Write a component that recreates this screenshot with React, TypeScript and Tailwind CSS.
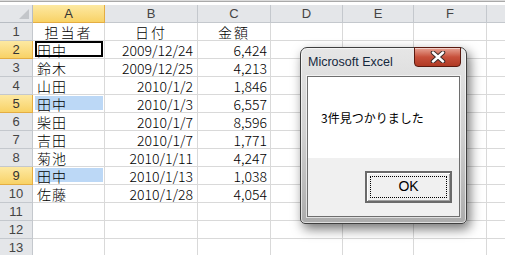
const jp = { fontFamily: '"Noto Sans CJK JP", "Noto Sans", sans-serif' };
const ui = { fontFamily: '"Liberation Sans", Arial, sans-serif' };

const cols = [
  { key: "A", w: "w-[72px]" },
  { key: "B", w: "w-[93px]" },
  { key: "C", w: "w-[73px]" },
  { key: "D", w: "w-[72px]" },
  { key: "E", w: "w-[71px]" },
  { key: "F", w: "w-[73px]" },
];

const data: [string, string, string][] = [
  ["田中", "2009/12/24", "6,424"],
  ["鈴木", "2009/12/25", "4,213"],
  ["山田", "2010/1/2", "1,846"],
  ["田中", "2010/1/3", "6,557"],
  ["柴田", "2010/1/7", "8,596"],
  ["吉田", "2010/1/7", "1,771"],
  ["菊池", "2010/1/11", "4,247"],
  ["田中", "2010/1/13", "1,038"],
  ["佐藤", "2010/1/28", "4,054"],
];

const found = new Set([2, 5, 9]);

function RowHead({ n }: { n: number }) {
  const on = found.has(n);
  return (
    <div
      className={
        on
          ? "w-[33px] h-[18px] shrink-0 flex items-center justify-center text-[13px] text-[#333] border-r border-b border-[#e4ad42] bg-gradient-to-b from-[#fde9a2] to-[#f8d265]"
          : "w-[33px] h-[18px] shrink-0 flex items-center justify-center text-[13px] text-[#444] border-r border-b border-[#c4c8cd] bg-[#e4e6e9]"
      }
      style={ui}
    >
      {n}
    </div>
  );
}

function Row({ n, cells }: { n: number; cells: [string, string, string] | null }) {
  const hl = n === 5 || n === 9;
  return (
    <div className="flex h-[18px]">
      <RowHead n={n} />
      <div className="w-[72px] shrink-0 border-r border-b border-[#d9d9d9] relative overflow-hidden flex items-center text-[14px] font-light text-black" style={jp}>
        {hl && <div className="absolute left-[2px] right-[1px] top-[1px] bottom-[2px] bg-[#bcd8f6]" />}
        {n === 2 && <div className="absolute left-[2px] right-[1px] top-0 bottom-[1px] border-2 border-black z-10" />}
        <span className="relative pl-[4px] leading-[14px] tracking-[1px]">{cells?.[0]}</span>
      </div>
      <div className="w-[93px] shrink-0 border-r border-b border-[#d9d9d9] overflow-hidden flex items-center justify-end pr-[4px] text-[14px] font-light text-black leading-[14px]" style={jp}>
        {cells?.[1]}
      </div>
      <div className="w-[73px] shrink-0 border-r border-b border-[#d9d9d9] overflow-hidden flex items-center justify-end pr-[3px] text-[14px] font-light text-black leading-[14px]" style={jp}>
        {cells?.[2]}
      </div>
      <div className="w-[72px] shrink-0 border-r border-b border-[#d9d9d9]" />
      <div className="w-[71px] shrink-0 border-r border-b border-[#d9d9d9]" />
      <div className="w-[73px] shrink-0 border-r border-b border-[#d9d9d9]" />
      <div className="flex-1 border-b border-[#d9d9d9]" />
    </div>
  );
}

function TitleRow() {
  return (
    <div className="flex h-[18px]">
      <RowHead n={1} />
      <div className="w-[72px] shrink-0 border-r border-b border-[#d9d9d9] overflow-hidden flex items-center justify-center text-[14px] font-light leading-[14px] tracking-[2px]" style={jp}>担当者</div>
      <div className="w-[93px] shrink-0 border-r border-b border-[#d9d9d9] overflow-hidden flex items-center justify-center text-[14px] font-light leading-[14px] tracking-[2px]" style={jp}>日付</div>
      <div className="w-[73px] shrink-0 border-r border-b border-[#d9d9d9] overflow-hidden flex items-center justify-center text-[14px] font-light leading-[14px] tracking-[2px]" style={jp}>金額</div>
      <div className="w-[72px] shrink-0 border-r border-b border-[#d9d9d9]" />
      <div className="w-[71px] shrink-0 border-r border-b border-[#d9d9d9]" />
      <div className="w-[73px] shrink-0 border-r border-b border-[#d9d9d9]" />
      <div className="flex-1 border-b border-[#d9d9d9]" />
    </div>
  );
}

function Dialog() {
  return (
    <div className="absolute left-[300px] top-[47px] w-[167px] h-[177px] rounded-t-[7px] rounded-b-[5px] border border-[#3f3f3f] bg-gradient-to-b from-[#e6e6e6] via-[#d0d0d0] to-[#acacac] shadow-[3px_5px_12px_rgba(0,0,0,0.55),inset_0_0_0_1px_rgba(255,255,255,0.6)] flex flex-col">
      <div className="h-[28px] shrink-0 flex items-center pl-[7px] text-[12.5px] text-[#15283d]" style={ui}>
        Microsoft Excel
      </div>
      <div className="absolute right-[5px] top-[-1px] w-[47px] h-[20px] rounded-b-[4px] border border-[#5a1a10] bg-gradient-to-b from-[#e6a395] via-[#c7503b] to-[#b03a24] shadow-[inset_0_1px_0_rgba(255,255,255,0.5)] flex items-center justify-center">
        <svg width="16" height="12" viewBox="0 0 16 12">
          <path d="M3 1.5 L13 10.5 M13 1.5 L3 10.5" stroke="#3a2a28" strokeWidth="4.5" strokeLinecap="round" />
          <path d="M3 1.5 L13 10.5 M13 1.5 L3 10.5" stroke="#ffffff" strokeWidth="2.5" strokeLinecap="round" />
        </svg>
      </div>
      <div className="flex-1 mx-[6px] mb-[6px] border border-[#6e6e6e] flex flex-col shadow-[0_0_0_1px_rgba(255,255,255,0.6)]">
        <div className="h-[81px] bg-white flex items-center pl-[13px] text-[12px] text-black" style={jp}>
          3件見つかりました
        </div>
        <div className="flex-1 bg-[#f0f0f0] flex items-center justify-end pr-[7px] pb-[1px]">
          <div className="relative w-[87px] h-[32px] border-2 border-[#6a6a6a] bg-[#f0f0f0] shadow-[inset_1px_1px_0_#ffffff,inset_-1px_-1px_0_#a0a0a0] flex items-center justify-center text-[14px] text-black" style={ui}>
            <div className="absolute inset-[3px] border border-dotted border-black" />
            OK
          </div>
        </div>
      </div>
    </div>
  );
}

export default function App() {
  return (
    <div className="relative w-[505px] h-[255px] overflow-hidden bg-white">
      <div className="h-[5px] flex flex-col">
        <div className="h-[1px] bg-[#dcdcdc]" />
        <div className="h-[1px] bg-[#a9a9a9]" />
        <div className="flex-1 bg-white" />
      </div>
      <div className="flex h-[18px]" style={ui}>
        <div className="w-[33px] shrink-0 border-r border-b border-[#b8bdc3] bg-[#e4e6e9] relative">
          <div className="absolute right-[3px] bottom-[3px] w-0 h-0 border-l-[10px] border-l-transparent border-b-[10px] border-b-[#c3c6ca]" />
        </div>
        {cols.map((c) =>
          c.key === "A" ? (
            <div key={c.key} className={`${c.w} shrink-0 border-r border-b border-[#e4ad42] bg-gradient-to-b from-[#fde9a2] to-[#f8d265] flex items-center justify-center text-[13px] text-[#333]`}>
              {c.key}
            </div>
          ) : (
            <div key={c.key} className={`${c.w} shrink-0 border-r border-b border-[#c4c8cd] bg-[#e4e6e9] flex items-center justify-center text-[13px] text-[#444]`}>
              {c.key}
            </div>
          )
        )}
        <div className="flex-1 border-b border-[#c4c8cd] bg-[#e4e6e9]" />
      </div>
      <TitleRow />
      {data.map((r, i) => (
        <Row key={i} n={i + 2} cells={r} />
      ))}
      {[11, 12, 13].map((n) => (
        <Row key={n} n={n} cells={null} />
      ))}
      <Dialog />
    </div>
  );
}
